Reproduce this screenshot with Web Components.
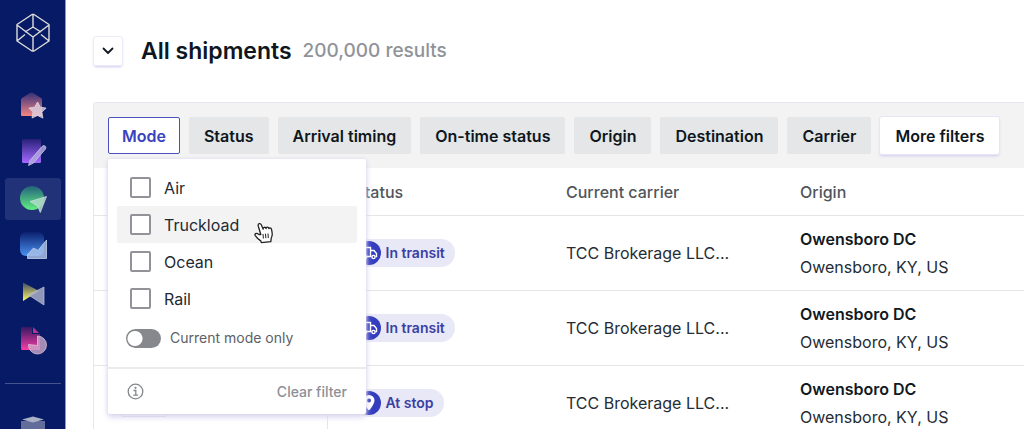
<!DOCTYPE html>
<html lang="en">
<head>
<meta charset="utf-8">
<title>All shipments</title>
<style>
body{margin:0;background:#fff;color:#0e1620;font:16px/24px Inter,"Liberation Sans",sans-serif}
</style>
</head>
<body>
<app-shell></app-shell>
<script>
const define = (name, html, setup) => customElements.define(name, class extends HTMLElement {
  constructor() {
    super();
    const t = document.createElement('template');
    t.innerHTML = '<style>*{box-sizing:border-box}button,input{font:inherit;color:inherit;margin:0}svg{display:block}</style>' + html;
    this.attachShadow({mode: 'open'}).append(t.content.cloneNode(true));
    if (setup) setup.call(this, this.shadowRoot);
  }
});

define('nav-rail', `
<style>
:host{display:flex;flex-direction:column;align-items:center;box-sizing:border-box;width:66px;flex:none;background:#071a66;border-right:1px solid #8f97bb;overflow:hidden}
.logo{margin-top:13px;flex:none}
nav{display:flex;flex-direction:column;flex:none;gap:5px;margin-top:31px}
a{display:flex;align-items:center;justify-content:center;width:56px;height:42px;border-radius:3px}
a.on{background:#223278}
hr{width:56px;height:1px;border:0;margin:22px 0 32px;background:#46538d;flex:none}
.box{flex:none}
</style>
<svg class="logo" width="36" height="40" viewBox="0 0 36 40" fill="none" stroke="#dcdcd8" stroke-width="1.4" stroke-linejoin="round"><path d="M17 1.500h2L34 11.500V28L19 38h-2L2 28V11.500zM18 2v13M18 24v14M2 12l16 12L34 12M2 28l8-6.500M34 28l-8-6.500M10 19l8-5 8 5"/></svg>
<nav>
<a href="#home" aria-label="Home"><svg width="30" height="30" viewBox="0 0 30 30"><defs><linearGradient id="a" x2="0" y2="1"><stop stop-color="#35307b"/><stop offset="1" stop-color="#f58583"/></linearGradient></defs><path d="M3 9.500Q3 8.500 4 8l8-5q1.500-1 3 0l8 5q1 .5 1 1.500V25q0 1-1 1H4q-1 0-1-1z" fill="url(#a)"/><path d="m19.500 12 2.800 5.200 5.800.9-4.200 4 1 6-5.400-2.600L14 28l1-5.900-4.200-4 5.900-.9z" fill="#ddd3e2" fill-opacity=".8" stroke="#e7d5df" stroke-width=".8" stroke-linejoin="round"/></svg></a>
<a href="#edit" aria-label="Edit"><svg width="30" height="30" viewBox="0 0 30 30"><defs><linearGradient id="b" x2="0" y2="1"><stop stop-color="#282079"/><stop offset="1" stop-color="#a56aff"/></linearGradient></defs><rect x="4" y="2" width="19" height="24" rx="1.500" fill="url(#b)"/><path d="m10.500 28.500 1.500-5 12-14q1.500-1.500 3-.5t.5 3l-12 14z" fill="#b2a7df" fill-opacity=".85" stroke="#ccc5e9" stroke-width=".8"/></svg></a>
<a class="on" href="#shipments" aria-label="Shipments"><svg width="30" height="30" viewBox="0 0 30 30"><defs><linearGradient id="c" x2="0" y2="1"><stop stop-color="#24627b"/><stop offset="1" stop-color="#62ef83"/></linearGradient></defs><circle cx="14" cy="14" r="12" fill="url(#c)"/><path d="m12 17.500 16.500-5-6.200 16-2.800-6.500z" fill="#b2d9c6" fill-opacity=".85" stroke="#cce4dc" stroke-width=".7" stroke-linejoin="round"/></svg></a>
<a href="#analytics" aria-label="Analytics"><svg width="30" height="30" viewBox="0 0 30 30"><defs><linearGradient id="d" x2="0" y2="1"><stop stop-color="#0b206f"/><stop offset="1" stop-color="#4b91f0"/></linearGradient></defs><rect x="2" y="1" width="24" height="24" rx="6" fill="url(#d)"/><path d="M9.500 27.500v-4l6-6.500 4.500 2.500L28.500 9v18.500z" fill="#a7bfe6" fill-opacity=".85" stroke="#bfd1ec" stroke-width=".8"/></svg></a>
<a href="#flows" aria-label="Flows"><svg width="30" height="30" viewBox="0 0 30 30"><defs><linearGradient id="e" x2="0" y2="1"><stop stop-color="#424a60"/><stop offset="1" stop-color="#fff962"/></linearGradient></defs><path d="M5 4.500 21 13 5 23z" fill="url(#e)"/><path d="M26 9v18L10.500 17z" fill="#a8adc7" fill-opacity=".85" stroke="#c1c5d8" stroke-width=".7"/></svg></a>
<a href="#reports" aria-label="Reports"><svg width="30" height="30" viewBox="0 0 30 30"><defs><linearGradient id="f" x2="0" y2="1"><stop stop-color="#361863"/><stop offset="1" stop-color="#fa3da5"/></linearGradient></defs><path d="M3 2h11v7h8v16H4.500Q3 25 3 23.500z" fill="url(#f)"/><path d="m15 2 6 6h-6z" fill="#ac398d"/><path d="M19.500 11a9 9 0 1 1-9 8.500l9 1z" fill="#c9a9c9" fill-opacity=".8" stroke="#dec0d8" stroke-width=".8"/></svg></a>
</nav>
<hr>
<svg class="box" width="24" height="30" viewBox="0 0 24 30"><path d="M0 5h24v25H0z" fill="#626d99"/><path d="m1 3.500 11-3 11 3-11 3z" fill="#aab0c6"/></svg>
`);

define('filter-chip', `
<style>
:host{display:block;flex:none}
button{display:block;height:37px;padding:0 15px;border:0;border-radius:2px;background:#e4e6e7;font-weight:600;line-height:36px;white-space:nowrap}
:host([active]) button{background:#fff;color:#3a42bd;border:1px solid #4a50c0;padding:0 13px}
:host([raised]) button{background:#fff;box-shadow:0 0 0 1px #e8e5f6,0 2px 3px #cfc9ed}
</style><button type="button"><slot></slot></button>`);

define('check-row', `
<style>
:host{display:block}
label{display:flex;align-items:center;gap:13px;height:37px;padding:0 13px;border-radius:2px;color:#222a33}
:host([hot]) label{background:#f3f3f3}
input{appearance:none;width:21px;height:21px;border:2px solid #929398;border-radius:2px;background:#fff}
input:checked{background:#3a42bd}
</style><label><input type="checkbox"><slot></slot></label>`);

define('mode-menu', `
<style>
:host{display:block;width:258px;background:#fff;border-radius:2px;box-shadow:0 0 3px #dcdaec,0 3px 6px #d6d2ee}
.list{padding:10px 9px 0}
.toggle{display:flex;align-items:center;gap:9px;height:38px;margin-top:2px;padding:0 9px;font-size:14px;color:#5c6067}
.toggle input{appearance:none;width:35px;height:19px;border-radius:10px;border:0;background:radial-gradient(circle at 9px 50%,#fff 7px,#86888d 8px)}
footer{display:flex;align-items:center;justify-content:space-between;height:47px;margin-top:10px;padding:0 19px;border-top:2px solid #ebebed}
footer button{border:0;background:none;padding:0;font-size:14px;font-weight:500;color:#8d9096}
.hand{position:absolute;left:146px;top:63px}
</style>
<div class="list"><check-row>Air</check-row><check-row hot>Truckload</check-row><check-row>Ocean</check-row><check-row>Rail</check-row>
<label class="toggle"><input type="checkbox" role="switch">Current mode only</label></div>
<footer><button type="button" aria-label="About this filter"><svg width="17" height="17" viewBox="0 0 17 17" fill="none" stroke="#85878c" stroke-width="1.300"><circle cx="8.500" cy="8.500" r="7.300"/><path d="M6.500 7.500h2.300v4.500M6.300 12.200h4.600"/><circle cx="8.500" cy="4.800" r=".5"/></svg></button><button type="button">Clear filter</button></footer>
<svg class="hand" width="19" height="22" viewBox="0 0 19 22"><path d="M6.800 12.500 4.300 4.200Q3.800 2.200 5.200 1.700T7.400 3l1.800 4.200Q9 5.600 10.200 5.300t1.900 1.300q0-1.300 1.200-1.400t1.700 1.500q.2-1 1.200-.9 1.300.2 1.500 2.300l.5 3.400q.2 2.500-1 4.800l-.4 3.400-9.500.9-.5-1.700q-3.400-2-5.500-5.300-.8-1.400.3-2 1.300-.6 3.300.9z" fill="#fff" stroke="#222" stroke-width="1.300" stroke-linejoin="round"/><path d="m9 12 .4 4.500m2.100-4.800.4 4.500m2.100-4.700.3 4.500" stroke="#222" fill="none"/></svg>
`);

define('filter-bar', `
<style>
:host{display:flex;gap:9px;padding:14px;background:#f3f3f3}
.anchor{position:relative;flex:none}
mode-menu{position:absolute;z-index:2;left:0;top:42px}
</style>
<div class="anchor"><filter-chip active>Mode</filter-chip><mode-menu></mode-menu></div>
<filter-chip>Status</filter-chip><filter-chip>Arrival timing</filter-chip><filter-chip>On-time status</filter-chip><filter-chip>Origin</filter-chip><filter-chip>Destination</filter-chip><filter-chip>Carrier</filter-chip><filter-chip raised>More filters</filter-chip>
`);

define('status-pill', `
<style>
:host{display:inline-flex;align-items:center;gap:5px;height:28px;padding:0 10px 0 2px;border-radius:14px;background:#e8e8f7;color:#3b3fa4;font-size:14px;font-weight:600;white-space:nowrap;vertical-align:middle}
i{display:flex;align-items:center;justify-content:center;width:24px;height:24px;border-radius:50%;background:#333dbd}
:host([kind=stop]) .truck,:host(:not([kind=stop])) .pin{display:none}
</style>
<i><svg class="truck" width="18" height="14" viewBox="0 0 18 14" fill="none" stroke="#fff" stroke-width="1.400"><path d="M3 10.500H1.500v-9h9v9H7M10.500 4.500h3.500l2.500 3v3h-1M10.500 10.500h1"/><circle cx="5" cy="11" r="1.600"/><circle cx="13.500" cy="11" r="1.600"/></svg><svg class="pin" width="12" height="16" viewBox="0 0 12 16"><path d="M6 0a5.500 5.500 0 0 0-5.500 5.500C.5 9.500 6 15.500 6 15.500s5.500-6 5.500-10A5.500 5.500 0 0 0 6 0z" fill="#fff"/><circle cx="6" cy="5.500" r="2" fill="#333dbd"/></svg></i><slot></slot>`);

define('shipment-table', `
<style>
:host{display:block}
table{width:100%;border-collapse:collapse;table-layout:fixed}
th,td{padding:0 0 0 27px;text-align:left;border-bottom:1px solid #e6e6e9;white-space:nowrap}
th{height:47px;padding-top:2px;font-weight:500;color:#50555c}
td{height:75px;color:#252c34;line-height:28px}
th:first-child,td:first-child{width:233px;border-right:1px solid #e6e6e9}
th:nth-child(2){width:212px}
th:nth-child(3){width:234px}
b{display:block;font-weight:600;color:#111922}
.chip{display:block;width:46px;height:28px;border:1px solid #dedee3;border-radius:2px}
</style>
<table><thead><tr><th></th><th>Status</th><th>Current carrier</th><th>Origin</th></tr></thead><tbody></tbody></table>
`, root => {
  const rows = [['transit', 'In transit'], ['transit', 'In transit'], ['stop', 'At stop']];
  root.querySelector('tbody').innerHTML = rows.map(([kind, label]) =>
    `<tr><td><span class="chip"></span></td><td><status-pill kind="${kind}">${label}</status-pill></td><td>TCC Brokerage LLC...</td><td><b>Owensboro DC</b>Owensboro, KY, US</td></tr>`).join('');
});

define('page-header', `
<style>
:host{display:flex;align-items:center;height:102px}
button{display:flex;align-items:center;justify-content:center;width:28px;height:28px;margin:0 19px 0 1px;padding:0;border:0;border-radius:2px;background:#fff;box-shadow:0 0 0 1px #eeebf9,0 2px 3px #cfc9ed}
h1{margin:0 11px 0 0;font-size:23px;line-height:32px;font-weight:600}
p{margin:0;font-size:19px;font-weight:500;color:#909399}
</style>
<button type="button" aria-label="Switch view"><svg width="12" height="8" viewBox="0 0 12 8" fill="none" stroke="#111922" stroke-width="1.800" stroke-linecap="round" stroke-linejoin="round"><path d="m1.500 1.500 4.500 4.500 4.500-4.500"/></svg></button>
<h1>All shipments</h1><p>200,000 results</p>`);

define('app-shell', `
<style>
:host{display:flex;height:100vh;overflow:hidden}
main{flex:1;min-width:0;padding-left:27px;overflow:auto;scrollbar-width:none}
section{border:solid #e8e6f4;border-width:1px 0 0 1px;border-radius:3px 0 0 0}
</style>
<nav-rail></nav-rail>
<main><page-header></page-header><section><filter-bar></filter-bar><shipment-table></shipment-table></section></main>`);
</script>
</body>
</html>
